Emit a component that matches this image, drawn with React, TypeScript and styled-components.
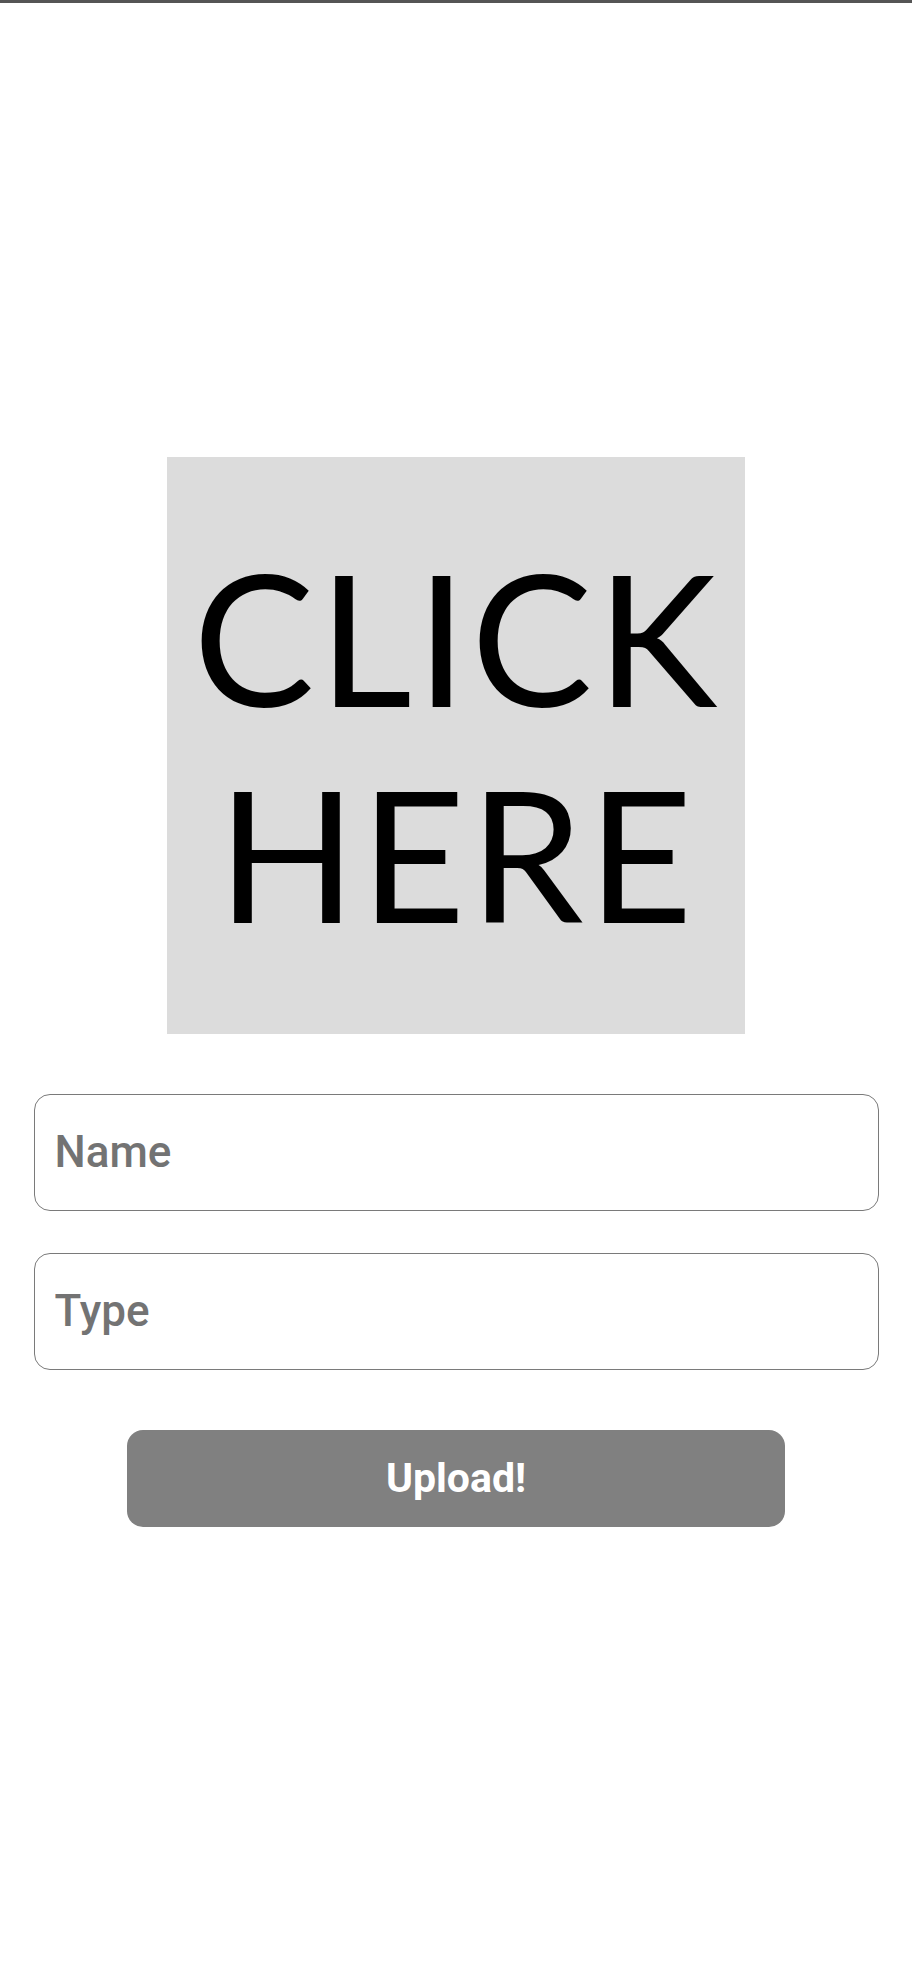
import React from "react";
import styled, { createGlobalStyle } from "styled-components";

const GlobalStyle = createGlobalStyle`
  html, body {
    margin: 0;
    padding: 0;
    background: #ffffff;
    font-family: Roboto, "Liberation Sans", Arial, sans-serif;
  }
  * { box-sizing: border-box; }
`;

const TopBar = styled.div`
  height: 3px;
  background: #555555;
`;

const Main = styled.main`
  min-height: calc(100vh - 3px);
  display: flex;
  flex-direction: column;
  align-items: center;
  justify-content: center;
`;

const ImagePicker = styled.button`
  width: 578px;
  height: 577px;
  background: #dcdcdc;
  border: none;
  padding: 0;
  margin: 0;
  display: flex;
  align-items: center;
  justify-content: center;
  cursor: pointer;
`;

const PickerLabel = styled.span`
  font-family: Lato, "Noto Sans", sans-serif;
  font-weight: 400;
  font-size: 182px;
  line-height: 216px;
  letter-spacing: 4px;
  color: #000000;
  text-align: center;
  display: block;
  padding-left: 2px;
`;

const Form = styled.form`
  width: 100%;
  display: flex;
  flex-direction: column;
  align-items: center;
  margin-top: 60px;
`;

const Field = styled.input<{ $gap?: number }>`
  width: calc(100% - 67px);
  height: 117px;
  margin-top: ${(p) => p.$gap ?? 0}px;
  border: 1.5px solid #7a7a7a;
  border-radius: 16px;
  padding: 0 0 0 20px;
  font-family: Roboto, "Liberation Sans", Arial, sans-serif;
  font-weight: 500;
  font-size: 44px;
  color: #333333;
  background: #ffffff;
  outline: none;

  &::placeholder {
    color: #737373;
  }
`;

const UploadButton = styled.button`
  width: 658px;
  height: 97px;
  margin-top: 60px;
  border: none;
  border-radius: 16px;
  background: #808080;
  color: #ffffff;
  font-family: Roboto, "Liberation Sans", Arial, sans-serif;
  font-weight: 700;
  font-size: 41px;
  cursor: pointer;
`;

export default function App() {
  return (
    <>
      <GlobalStyle />
      <TopBar />
      <Main>
        <ImagePicker type="button">
          <PickerLabel>
            CLICK
            <br />
            HERE
          </PickerLabel>
        </ImagePicker>
        <Form onSubmit={(e) => e.preventDefault()}>
          <Field placeholder="Name" />
          <Field placeholder="Type" $gap={42} />
          <UploadButton type="submit">Upload!</UploadButton>
        </Form>
      </Main>
    </>
  );
}
